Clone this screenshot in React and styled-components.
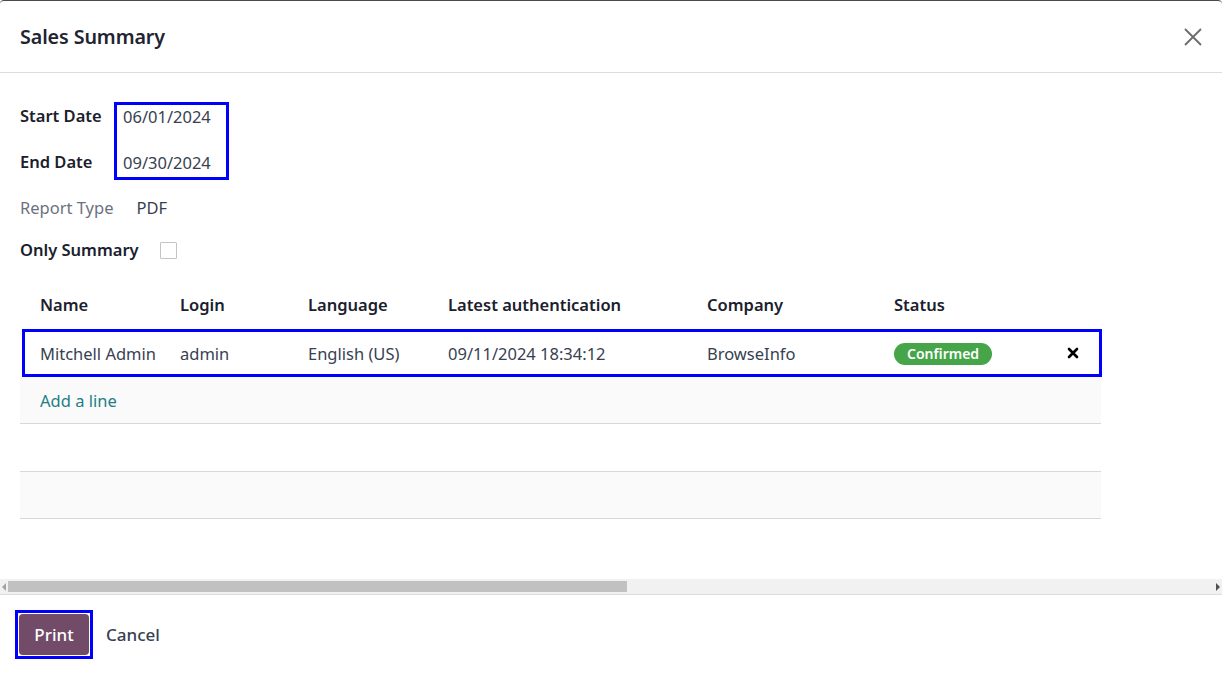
import React from 'react';
import styled, { createGlobalStyle } from 'styled-components';

const GlobalStyle = createGlobalStyle`
    html, body {
        margin: 0;
        padding: 0;
        background: #ffffff;
        font-family: "Noto Sans", "Open Sans", sans-serif;
        color: #374151;
    }
`;

const Dialog = styled.div`
    width: 1222px;
    height: 674px;
    box-sizing: border-box;
    border-top: 1px solid #4a4a4a;
    border-radius: 4px 4px 0 0;
    display: flex;
    flex-direction: column;
    overflow: hidden;
`;

const Header = styled.div`
    height: 72px;
    flex-shrink: 0;
    box-sizing: border-box;
    border-bottom: 1px solid #dcdcdc;
    display: flex;
    align-items: center;
    justify-content: space-between;
    padding: 0 18px 0 20px;
`;

const Title = styled.h4`
    margin: 0;
    font-size: 19.7px;
    font-weight: 600;
    color: #1f2430;
    letter-spacing: -0.1px;
`;

const CloseButton = styled.button`
    border: none;
    background: none;
    padding: 0;
    width: 22px;
    height: 22px;
    display: flex;
    align-items: center;
    justify-content: center;
    cursor: pointer;
`;

const Body = styled.div`
    flex: 1;
    padding: 29px 20px 0 20px;
    display: flex;
    flex-direction: column;
`;

const DateGroup = styled.div`
    display: flex;
    align-items: flex-start;
`;

const LabelColumn = styled.div`
    display: flex;
    flex-direction: column;
    gap: 22px;
    padding-top: 2px;
    width: 94px;
`;

const Label = styled.span`
    font-size: 16.5px;
    font-weight: 600;
    color: #1a202c;
    line-height: 24px;
    white-space: nowrap;
`;

const ValueBox = styled.div`
    border: 3px solid #0000ff;
    padding: 0 15px 2px 6px;
    display: flex;
    flex-direction: column;
    gap: 22px;
`;

const Value = styled.span`
    font-size: 16.5px;
    color: #374151;
    line-height: 24px;
`;

const FieldRow = styled.div`
    display: flex;
    align-items: center;
    margin-top: ${props => props.top}px;
    gap: ${props => props.gap}px;
`;

const MutedLabel = styled.span`
    font-size: 16.5px;
    color: #6b7280;
    line-height: 24px;
`;

const Checkbox = styled.span`
    width: 15px;
    height: 15px;
    border: 1px solid #c4c4c4;
    border-radius: 1px;
    background: #fff;
    display: inline-block;
`;

const Table = styled.div`
    margin-top: 22px;
    width: 1081px;
`;

const Grid = styled.div`
    display: grid;
    grid-template-columns: 140px 128px 140px 259px 187px 150px 1fr;
    align-items: center;
    padding-left: 20px;
    box-sizing: border-box;
`;

const HeadRow = styled(Grid)`
    height: 45px;
    padding-bottom: 4px;
`;

const HeadCell = styled.span`
    font-size: 16.5px;
    font-weight: 600;
    color: #1a202c;
    white-space: nowrap;
`;

const DataRow = styled(Grid)`
    height: 48px;
    margin-left: 2px;
    margin-right: -1px;
    padding-left: 15px;
    border: 3px solid #0000ff;
`;

const Cell = styled.span`
    font-size: 16.5px;
    color: #374151;
    white-space: nowrap;
`;

const Badge = styled.span`
    display: inline-block;
    background: #45a548;
    color: #fff;
    font-size: 14px;
    font-weight: 600;
    border-radius: 12px;
    padding: 0 13px;
    height: 22px;
    line-height: 21px;
`;

const RemoveCell = styled.span`
    display: flex;
    justify-content: flex-end;
    padding-right: 20px;
`;

const FillerRow = styled.div`
    height: ${props => props.h || 48}px;
    box-sizing: border-box;
    border-bottom: 1px solid #d8d8d8;
    background: ${props => (props.striped ? '#fafafa' : '#ffffff')};
    display: flex;
    align-items: center;
    padding-left: 20px;
`;

const AddLine = styled.a`
    font-size: 16.5px;
    color: #1d7f84;
    text-decoration: none;
    cursor: pointer;
`;

const Spacer = styled.div`
    flex: 1;
`;

const Scrollbar = styled.div`
    height: 15px;
    flex-shrink: 0;
    background: #f1f1f1;
    border-bottom: 1px solid #dcdcdc;
    display: flex;
    align-items: center;
    padding: 0 2px;
    gap: 2px;
`;

const ScrollArrow = styled.span`
    width: 0;
    height: 0;
    border-top: 4px solid transparent;
    border-bottom: 4px solid transparent;
    ${props => (props.right
        ? 'border-left: 4px solid #505050;'
        : 'border-right: 4px solid #a3a3a3;')}
`;

const ScrollTrack = styled.div`
    flex: 1;
    height: 11px;
    display: flex;
`;

const ScrollThumb = styled.div`
    height: 100%;
    background: #c1c1c1;
`;

const Footer = styled.div`
    height: 79px;
    flex-shrink: 0;
    display: flex;
    align-items: center;
    padding-left: 15px;
    gap: 13px;
`;

const PrintFrame = styled.div`
    border: 3px solid #0000ff;
    padding: 1px;
    display: flex;
`;

const PrimaryButton = styled.button`
    background: #714b67;
    color: #fff;
    border: none;
    border-radius: 4px;
    font-family: inherit;
    font-size: 17px;
    font-weight: 500;
    height: 41px;
    width: 70px;
    padding: 0;
    cursor: pointer;
`;

const SecondaryButton = styled.button`
    background: none;
    border: none;
    color: #374151;
    font-family: inherit;
    font-size: 17px;
    font-weight: 500;
    padding: 0;
    cursor: pointer;
`;

const columns = ['Name', 'Login', 'Language', 'Latest authentication', 'Company', 'Status', ''];

const row = {
    name: 'Mitchell Admin',
    login: 'admin',
    language: 'English (US)',
    auth: '09/11/2024 18:34:12',
    company: 'BrowseInfo',
    status: 'Confirmed',
};

const App = () => {
    return (
        <>
            <GlobalStyle />
            <Dialog>
                <Header>
                    <Title>Sales Summary</Title>
                    <CloseButton aria-label="Close">
                        <svg width="20" height="20" viewBox="0 0 20 20">
                            <path d="M2 2 L18 18 M18 2 L2 18" stroke="#6b6b6b" strokeWidth="1.8" fill="none" />
                        </svg>
                    </CloseButton>
                </Header>
                <Body>
                    <DateGroup>
                        <LabelColumn>
                            <Label>Start Date</Label>
                            <Label>End Date</Label>
                        </LabelColumn>
                        <ValueBox>
                            <Value>06/01/2024</Value>
                            <Value>09/30/2024</Value>
                        </ValueBox>
                    </DateGroup>
                    <FieldRow top={16} gap={23}>
                        <MutedLabel>Report Type</MutedLabel>
                        <Value>PDF</Value>
                    </FieldRow>
                    <FieldRow top={18} gap={21}>
                        <Label>Only Summary</Label>
                        <Checkbox />
                    </FieldRow>
                    <Table>
                        <HeadRow>
                            {columns.map((col, i) => (
                                <HeadCell key={i}>{col}</HeadCell>
                            ))}
                        </HeadRow>
                        <DataRow>
                            <Cell>{row.name}</Cell>
                            <Cell>{row.login}</Cell>
                            <Cell>{row.language}</Cell>
                            <Cell>{row.auth}</Cell>
                            <Cell>{row.company}</Cell>
                            <span><Badge>{row.status}</Badge></span>
                            <RemoveCell>
                                <svg width="12" height="12" viewBox="0 0 12 12">
                                    <path d="M2 2 L10 10 M10 2 L2 10" stroke="#000" strokeWidth="2.6" strokeLinecap="round" />
                                </svg>
                            </RemoveCell>
                        </DataRow>
                        <FillerRow striped h={47}>
                            <AddLine>Add a line</AddLine>
                        </FillerRow>
                        <FillerRow />
                        <FillerRow striped h={47} />
                    </Table>
                    <Spacer />
                </Body>
                <Scrollbar>
                    <ScrollArrow />
                    <ScrollTrack>
                        <ScrollThumb style={{ width: '51.3%' }} />
                    </ScrollTrack>
                    <ScrollArrow right />
                </Scrollbar>
                <Footer>
                    <PrintFrame>
                        <PrimaryButton>Print</PrimaryButton>
                    </PrintFrame>
                    <SecondaryButton>Cancel</SecondaryButton>
                </Footer>
            </Dialog>
        </>
    );
};

export default App;
